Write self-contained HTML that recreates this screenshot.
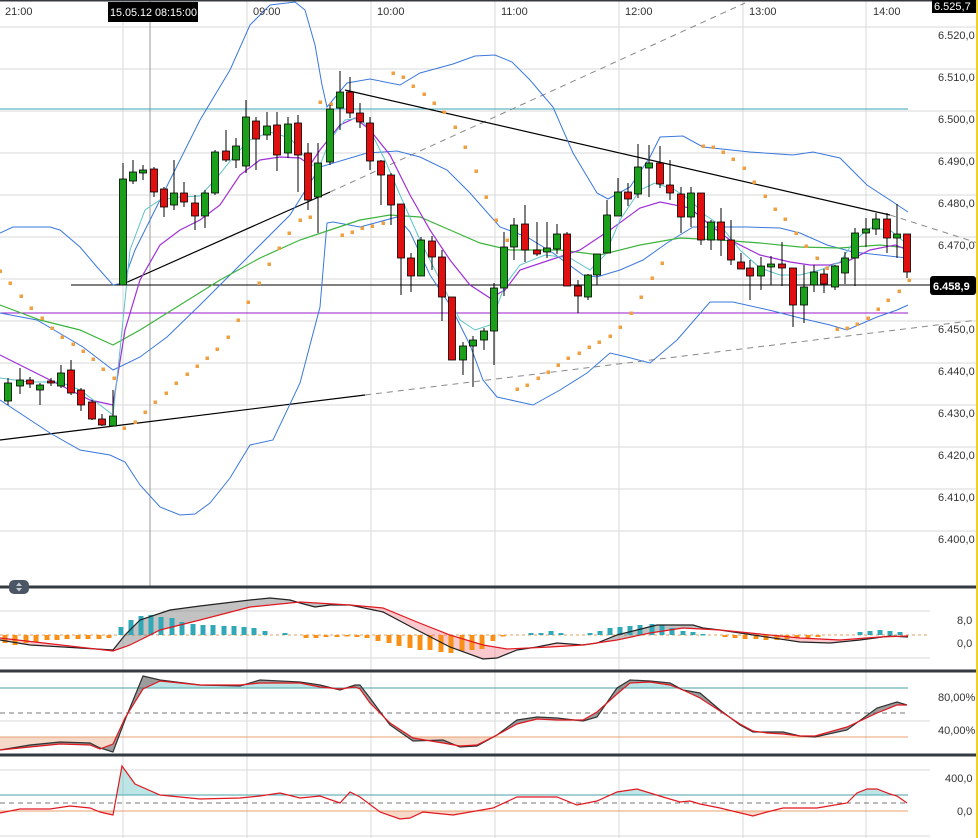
<!DOCTYPE html>
<html><head><meta charset="utf-8">
<style>
html,body{margin:0;padding:0;background:#fff;}
body{width:978px;height:838px;overflow:hidden;font-family:"Liberation Sans",sans-serif;}
svg{display:block}
text{font-family:"Liberation Sans",sans-serif;font-size:11px;fill:#333}
</style></head>
<body>
<svg id="s" width="978" height="838" xmlns="http://www.w3.org/2000/svg"></svg>
<script>
var o=[];
function P(pts){return pts.map(function(p,i){return (i?'L':'M')+p[0]+' '+p[1];}).join(' ');}
function line(pts,c,w,extra){o.push('<path d="'+P(pts)+'" fill="none" stroke="'+c+'" stroke-width="'+(w||1)+'" '+(extra||'')+'/>');}
function fillBetween(a,b,c,clip){var r=b.slice().reverse();o.push('<path '+(clip?'clip-path="url(#'+clip+')" ':'')+'d="'+P(a.concat(r))+'Z" fill="'+c+'" stroke="none"/>');}
// grid
for(var k=0;k<13;k++){var y=27+42*k;o.push('<line x1="0" x2="978" y1="'+y+'" y2="'+y+'" stroke="#d9d9d9"/>');}
[123,247,371,495,619,743,866].forEach(function(x){o.push('<line x1="'+x+'" x2="'+x+'" y1="0" y2="838" stroke="#d9d9d9"/>');});
o.push('<line x1="150" x2="150" y1="0" y2="586" stroke="#999"/>');
[611,658,721,770,836].forEach(function(y){o.push('<line x1="0" x2="930" y1="'+y+'" y2="'+y+'" stroke="#d9d9d9"/>');});
o.push('<line x1="0" x2="908" y1="109" y2="109" stroke="#3aa6b4"/>');
o.push('<line x1="0" x2="908" y1="313" y2="313" stroke="#9a1ec8"/>');
o.push('<line x1="71" x2="935" y1="285" y2="285" stroke="#000"/>');
line([[123,284],[330,192]],'#000',1.2);
line([[330,192],[745,3]],'#888',1,'stroke-dasharray="6,5"');
line([[345,90],[890,215]],'#000',1.2);
line([[890,215],[978,243]],'#888',1,'stroke-dasharray="6,5"');
line([[0,440],[365,395]],'#000',1.2);
line([[365,395],[978,320]],'#888',1,'stroke-dasharray="6,5"');
var bb='#3a78dc';
line([[0,233],[13,227],[50,227],[60,230],[80,247],[97,267],[113,285],[123,283],[135,250],[160,200],[200,120],[230,70],[250,25],[270,5],[295,2],[305,10],[315,45],[322,85],[327,107],[347,83],[370,79],[400,85],[420,73],[453,64],[475,56],[495,55],[512,62],[530,80],[553,107],[573,153],[597,193],[608,199],[630,187],[650,157],[660,137],[683,136],[703,147],[750,152],[793,155],[813,152],[840,158],[867,185],[893,202],[908,212]],bb);
line([[0,313],[37,320],[83,347],[113,370],[140,357],[167,337],[200,305],[250,255],[290,215],[320,167],[367,153],[397,151],[420,157],[447,170],[470,193],[500,227],[527,237],[553,253],[583,275],[597,277],[610,273],[620,270],[643,260],[667,243],[693,227],[747,227],[780,228],[800,233],[827,245],[853,252],[907,258]],bb);
line([[0,400],[50,433],[80,450],[110,455],[125,462],[140,485],[160,507],[180,515],[195,514],[210,503],[230,478],[250,445],[273,440],[300,383],[320,307],[327,223],[333,222],[360,227],[397,217],[410,232],[430,275],[450,305],[470,345],[483,380],[497,397],[533,405],[560,390],[587,373],[610,353],[627,357],[650,363],[677,340],[710,302],[733,302],[773,311],[800,318],[830,325],[847,330],[877,317],[897,310],[908,305]],bb);
line([[0,305],[40,320],[80,330],[113,345],[140,330],[180,305],[220,280],[260,258],[300,240],[330,230],[360,220],[390,215],[420,217],[450,230],[480,243],[510,250],[560,250],[600,255],[640,245],[680,238],[720,240],[760,243],[800,247],[840,248],[880,245],[908,248]],'#3cb43c',1.2);
line([[0,355],[30,370],[60,385],[90,400],[113,405],[125,330],[140,280],[160,245],[180,230],[200,220],[220,205],[240,175],[260,160],[280,157],[300,158],[310,165],[320,150],[340,125],[355,118],[370,130],[390,155],[410,195],[430,230],[450,260],[470,285],[490,298],[505,290],[520,270],[550,260],[580,250],[610,230],[640,208],[660,202],[690,208],[710,225],[730,240],[760,255],[790,262],[810,265],[830,265],[850,260],[870,250],[895,245],[908,250]],'#a030d8',1.2);
line([[0,378],[30,382],[60,382],[80,390],[100,405],[113,415],[120,350],[130,250],[145,210],[160,200],[180,197],[200,196],[215,180],[235,155],[250,140],[270,132],[290,138],[300,150],[310,165],[320,165],[330,140],[345,120],[360,118],[370,130],[385,160],[400,195],[420,240],[440,280],[460,320],[475,330],[490,325],[505,285],[520,265],[545,255],[570,258],[590,270],[605,255],[620,220],[640,190],[655,183],[675,190],[690,200],[705,215],[720,225],[740,250],[760,268],[780,275],[800,275],[820,270],[840,262],[855,240],[870,228],[890,230],[908,245]],'#5ec4c8',1);
var sar=[[0,271],[10,283],[21,296],[31,308],[42,318],[52,328],[62,337],[73,344],[83,351],[93,359],[103,369],[114,378],[124,428],[135,422],[145,412],[155,402],[166,393],[176,383],[187,374],[197,366],[207,358],[217,349],[228,337],[238,320],[248,302],[259,283],[269,264],[279,248],[289,233],[300,220],[310,217],[320,102],[331,104],[342,235],[352,232],[362,228],[372,226],[383,223],[393,73],[403,77],[413,86],[424,94],[434,103],[444,112],[455,127],[465,147],[476,171],[486,197],[496,220],[507,240],[517,389],[527,385],[538,378],[548,372],[558,365],[568,358],[579,353],[589,347],[599,342],[610,336],[620,327],[631,313],[641,297],[652,278],[662,263],[703,146],[713,147],[723,152],[733,159],[744,168],[754,182],[765,196],[775,209],[785,219],[796,233],[806,246],[817,258],[827,268],[837,329],[847,328],[857,324],[868,318],[878,309],[888,300],[899,291],[909,280]];
sar.forEach(function(p){o.push('<rect x="'+(p[0]-1.5)+'" y="'+(p[1]-1.5)+'" width="3.5" height="3.5" fill="#f0a040"/>');});
var C=[[8,383,401,378,405,1],[20,380,386,368,394,1],[30,380,384,377,388,0],[40,385,390,383,405,1],[51,381,383,378,386,0],[61,373,386,365,388,1],[71,370,393,360,395,0],[81,390,405,388,411,0],[92,402,419,400,420,0],[102,419,425,414,426,0],[113,416,426,390,426,1],[123,179,285,163,285,1],[133,172,181,160,184,1],[143,170,173,165,180,1],[154,169,192,167,197,0],[164,189,207,187,217,0],[174,193,205,160,210,1],[184,193,202,182,207,0],[195,203,216,195,230,0],[205,193,216,190,228,1],[215,152,193,150,195,1],[226,151,160,130,162,0],[236,146,160,138,168,1],[246,117,166,100,173,1],[256,121,139,117,170,0],[267,126,135,112,140,1],[277,125,155,112,171,0],[288,124,153,117,158,1],[298,123,155,115,192,0],[308,153,200,143,210,0],[318,163,197,143,233,1],[330,109,162,105,165,1],[340,92,108,71,130,1],[350,92,113,77,118,0],[360,113,122,103,128,0],[370,123,161,117,170,0],[381,161,175,160,205,0],[391,175,205,173,225,0],[401,204,258,204,295,0],[411,258,276,253,292,0],[421,240,276,237,276,1],[432,241,257,236,270,0],[442,257,297,250,321,0],[452,297,360,297,360,0],[463,346,360,342,375,1],[473,340,346,336,387,1],[484,331,340,328,350,1],[494,288,331,283,365,1],[504,247,288,232,296,1],[514,225,247,218,260,1],[525,224,250,205,262,0],[537,250,254,222,256,0],[547,248,252,222,258,1],[557,234,249,224,254,1],[567,234,286,232,286,0],[578,286,296,280,313,0],[588,275,297,274,300,1],[597,254,275,254,285,1],[607,215,253,200,253,1],[618,192,216,178,216,1],[628,192,199,183,206,0],[638,167,194,144,198,1],[649,163,168,145,197,1],[660,163,184,146,188,0],[670,185,193,160,200,0],[681,194,217,187,233,0],[691,193,217,187,227,1],[701,193,240,193,245,0],[711,222,240,220,250,1],[721,222,240,208,256,0],[731,240,260,220,265,0],[741,262,269,253,268,0],[750,268,276,260,300,0],[761,266,276,257,290,1],[771,264,267,256,285,1],[782,264,268,242,286,0],[793,268,305,268,327,0],[804,287,305,265,323,1],[814,272,285,265,292,1],[824,274,284,269,293,0],[835,266,287,265,290,1],[845,258,273,252,284,1],[855,233,258,228,286,1],[866,229,233,218,247,1],[876,219,229,213,235,1],[887,219,238,213,253,0],[897,234,238,204,258,1],[907,234,272,234,278,0]];
C.forEach(function(c){o.push('<line x1="'+c[0]+'" x2="'+c[0]+'" y1="'+c[3]+'" y2="'+c[4]+'" stroke="#000"/>');var h=Math.max(2,c[2]-c[1]);o.push('<rect x="'+(c[0]-3.5)+'" y="'+c[1]+'" width="7" height="'+h+'" fill="'+(c[5]?'#1aa01a':'#e01010')+'" stroke="#000" stroke-width="0.8"/>');});
// clips
o.push('<clipPath id="bu"><rect x="113" y="0" width="237" height="838"/><rect x="590" y="0" width="125" height="838"/><rect x="860" y="0" width="60" height="838"/></clipPath>');
o.push('<clipPath id="be"><rect x="0" y="0" width="113" height="838"/><rect x="350" y="0" width="240" height="838"/><rect x="715" y="0" width="145" height="838"/></clipPath>');
// MACD
o.push('<line x1="0" x2="930" y1="635" y2="635" stroke="#e0a060" stroke-dasharray="3,3"/>');
var mb=[[0,640],[30,645],[113,650],[125,635],[140,620],[170,610],[200,606],[250,600],[270,598],[290,600],[300,603],[315,607],[330,605],[350,605],[383,612],[417,630],[450,647],[483,659],[497,658],[517,650],[537,647],[557,643],[583,645],[597,643],[617,635],[637,630],[657,625],[693,625],[703,628],[720,630],[760,636],[800,642],[830,643],[860,640],[890,636],[908,637]];
var mr=[[0,638],[113,651],[130,645],[160,630],[200,620],[250,607],[300,602],[350,605],[383,608],[417,622],[450,635],[483,645],[507,649],[550,647],[583,645],[617,640],[650,633],[683,628],[720,630],[760,634],[800,638],[840,640],[880,637],[908,636]];
fillBetween(mb,mr,'rgba(120,120,120,0.45)','bu');
fillBetween(mb,mr,'rgba(240,120,130,0.4)','be');
var hist=[[5,643,0],[15,645,0],[26,643,0],[36,642,0],[47,640,0],[57,640,0],[67,639,0],[78,639,0],[88,639,0],[99,639,0],[109,638,0],[121,627,1],[131,620,1],[141,616,1],[151,615,1],[161,617,1],[172,618,1],[182,622,1],[193,624,1],[203,625,1],[213,625,1],[224,626,1],[234,626,1],[244,627,1],[254,628,1],[265,631,1],[285,633,1],[306,638,0],[316,638,0],[326,637,0],[337,637,0],[347,636,0],[357,637,0],[367,638,0],[378,641,0],[389,643,0],[399,646,0],[410,648,0],[420,650,0],[430,650,0],[441,652,0],[451,653,0],[462,651,0],[472,650,0],[482,649,0],[493,641,0],[503,636,0],[531,633,1],[541,633,1],[551,631,1],[561,633,1],[590,633,1],[600,631,1],[610,628,1],[620,627,1],[630,626,1],[640,625,1],[652,624,1],[662,625,1],[672,628,1],[683,631,1],[693,632,1],[703,634,1],[725,637,0],[735,638,0],[745,639,0],[756,639,0],[766,640,0],[777,640,0],[787,639,0],[797,638,0],[808,638,0],[818,637,0],[860,632,1],[870,631,1],[880,630,1],[890,631,1],[900,632,1]];
hist.forEach(function(h){var y1=Math.min(h[1],635),y2=Math.max(h[1],635);o.push('<rect x="'+(h[0]-2.5)+'" y="'+y1+'" width="5" height="'+Math.max(1.5,y2-y1)+'" fill="'+(h[2]?'#30a8b8':'#f89018')+'"/>');});
line(mb,'#222',1.2);line(mr,'#e01820',1.2);
// Stoch
o.push('<line x1="0" x2="908" y1="688" y2="688" stroke="#4aa0a8"/>');
o.push('<line x1="0" x2="908" y1="713" y2="713" stroke="#777" stroke-dasharray="5,4"/>');
o.push('<line x1="0" x2="908" y1="737" y2="737" stroke="#e8a070"/>');
var sk=[[0,750],[30,745],[60,742],[90,743],[100,748],[113,752],[125,720],[143,676],[160,680],[200,685],[240,686],[260,680],[300,682],[320,685],[340,690],[355,685],[360,685],[370,698],[390,725],[413,741],[443,740],[460,747],[477,746],[497,735],[517,720],[537,717],[557,718],[583,721],[597,717],[617,688],[630,680],[650,681],[670,683],[683,690],[700,693],[720,710],[740,725],[753,732],[767,732],[783,732],[800,736],[815,737],[847,730],[877,708],[897,702],[907,705]];
var sd=sk.map(function(p,i){var a=sk[Math.max(0,i-1)],b=sk[Math.min(sk.length-1,i+1)];return [p[0],Math.round((a[1]+p[1]*2+b[1])/4+1)];});
o.push('<clipPath id="c1"><rect x="0" y="670" width="978" height="18"/></clipPath><clipPath id="c2"><rect x="0" y="737" width="978" height="18"/></clipPath>');
o.push('<path clip-path="url(#c1)" d="'+P(sd)+' L908 688 L0 688Z" fill="rgba(90,190,190,0.4)"/>');
o.push('<path clip-path="url(#c2)" d="'+P(sd)+' L908 737 L0 737Z" fill="rgba(230,160,120,0.4)"/>');
fillBetween(sk,sd,'rgba(90,90,90,0.6)');
line(sk,'#333',1.2);line(sd,'#e01820',1.2);
// CCI
o.push('<line x1="0" x2="908" y1="795" y2="795" stroke="#4aa0a8"/>');
o.push('<line x1="0" x2="908" y1="803" y2="803" stroke="#777" stroke-dasharray="5,4"/>');
o.push('<line x1="0" x2="908" y1="811" y2="811" stroke="#e8a070"/>');
var cc=[[0,813],[20,809],[50,809],[70,806],[90,808],[100,812],[113,815],[122,766],[135,784],[160,795],[200,799],[240,798],[260,796],[280,793],[300,798],[320,796],[340,803],[350,792],[360,797],[380,812],[400,819],[410,818],[423,812],[453,815],[493,808],[517,797],[557,797],[577,805],[597,801],[617,792],[637,789],[663,797],[680,802],[690,801],[700,804],[720,808],[753,816],[767,812],[783,808],[817,808],[847,803],[857,793],[867,789],[877,789],[890,794],[897,796],[907,803]];
o.push('<clipPath id="c3"><rect x="0" y="755" width="978" height="40"/></clipPath><clipPath id="c4"><rect x="0" y="811" width="978" height="25"/></clipPath>');
o.push('<path clip-path="url(#c3)" d="'+P(cc)+' L908 795 L0 795Z" fill="rgba(90,190,190,0.4)"/>');
o.push('<path clip-path="url(#c4)" d="'+P(cc)+' L908 811 L0 811Z" fill="rgba(230,160,120,0.4)"/>');
line(cc,'#e01820',1.2);
[0,587,671,755].forEach(function(y){o.push('<rect x="0" y="'+(y-1.5)+'" width="976" height="3" fill="#343a40"/>');});
o.push('<rect x="9" y="580" width="20" height="14" rx="5" fill="#4a5566"/><path d="M16 586 L19 582.5 L22 586Z M16 588 L19 591.5 L22 588Z" fill="#c8ced8"/>');
o.push('<rect x="976" y="0" width="2" height="838" fill="#f0d020"/>');
[['21:00',5],['09:00',253],['10:00',377],['11:00',501],['12:00',625],['13:00',749],['14:00',873]].forEach(function(t){o.push('<text x="'+t[1]+'" y="15">'+t[0]+'</text>');});
o.push('<rect x="108" y="2" width="90" height="20" fill="#000"/><text x="110" y="16" style="fill:#fff;font-size:10.8px">15.05.12 08:15:00</text>');
var pl=['6.520,0','6.510,0','6.500,0','6.490,0','6.480,0','6.470,0',null,'6.450,0','6.440,0','6.430,0','6.420,0','6.410,0','6.400,0'];
pl.forEach(function(t,i){if(t)o.push('<text x="938" y="'+(39+42*i)+'">'+t+'</text>');});
o.push('<rect x="932" y="0" width="44" height="13" fill="#000"/><text x="934" y="10" style="fill:#fff;font-size:11px">6.525,7</text>');
o.push('<rect x="930" y="276" width="46" height="19" rx="3" fill="#000"/><text x="933" y="290" style="fill:#fff;font-size:11px;font-weight:bold">6.458,9</text>');
[['8,0',957,624],['0,0',957,647],['80,00%',938,701],['40,00%',938,734],['400,0',945,782],['0,0',957,815]].forEach(function(t){o.push('<text x="'+t[1]+'" y="'+t[2]+'">'+t[0]+'</text>');});
document.getElementById('s').innerHTML=o.join('');
</script>
</body></html>
